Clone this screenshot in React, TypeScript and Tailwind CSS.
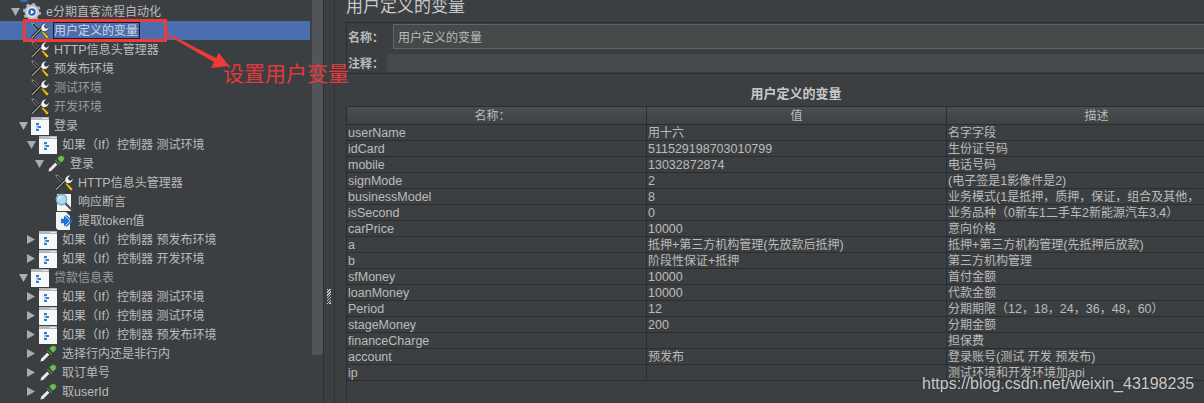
import React from 'react';

type IconKind = 'gear' | 'tools' | 'flow' | 'dropper' | 'lens' | 'extract';

interface TreeNode {
  depth: number;
  label: string;
  icon: IconKind;
  arrow?: 'open' | 'closed';
  dim?: boolean;
  selected?: boolean;
}

const nodes: TreeNode[] = [
  { depth: 0, label: 'e分期直客流程自动化', icon: 'gear', arrow: 'open' },
  { depth: 1, label: '用户定义的变量', icon: 'tools', selected: true },
  { depth: 1, label: 'HTTP信息头管理器', icon: 'tools' },
  { depth: 1, label: '预发布环境', icon: 'tools' },
  { depth: 1, label: '测试环境', icon: 'tools', dim: true },
  { depth: 1, label: '开发环境', icon: 'tools', dim: true },
  { depth: 1, label: '登录', icon: 'flow', arrow: 'open' },
  { depth: 2, label: '如果（If）控制器 测试环境', icon: 'flow', arrow: 'open' },
  { depth: 3, label: '登录', icon: 'dropper', arrow: 'open' },
  { depth: 4, label: 'HTTP信息头管理器', icon: 'tools' },
  { depth: 4, label: '响应断言', icon: 'lens' },
  { depth: 4, label: '提取token值', icon: 'extract' },
  { depth: 2, label: '如果（If）控制器 预发布环境', icon: 'flow', arrow: 'closed' },
  { depth: 2, label: '如果（If）控制器 开发环境', icon: 'flow', arrow: 'closed' },
  { depth: 1, label: '贷款信息表', icon: 'flow', arrow: 'open', dim: true },
  { depth: 2, label: '如果（If）控制器 测试环境', icon: 'flow', arrow: 'closed' },
  { depth: 2, label: '如果（If）控制器 测试环境', icon: 'flow', arrow: 'closed' },
  { depth: 2, label: '如果（If）控制器 预发布环境', icon: 'flow', arrow: 'closed' },
  { depth: 2, label: '选择行内还是非行内', icon: 'dropper', arrow: 'closed' },
  { depth: 2, label: '取订单号', icon: 'dropper', arrow: 'closed' },
  { depth: 2, label: '取userId', icon: 'dropper', arrow: 'closed' },
];

const rows: [string, string, string][] = [
  ['userName', '用十六', '名字字段'],
  ['idCard', '511529198703010799', '生份证号码'],
  ['mobile', '13032872874', '电话号码'],
  ['signMode', '2', '(电子签是1影像件是2)'],
  ['businessModel', '8', '业务模式(1是抵押，质押，保证，组合及其他，'],
  ['isSecond', '0', '业务品种（0新车1二手车2新能源汽车3,4）'],
  ['carPrice', '10000', '意向价格'],
  ['a', '抵押+第三方机构管理(先放款后抵押)', '抵押+第三方机构管理(先抵押后放款)'],
  ['b', '阶段性保证+抵押', '第三方机构管理'],
  ['sfMoney', '10000', '首付金额'],
  ['loanMoney', '10000', '代款金额'],
  ['Period', '12', '分期期限（12，18，24，36，48，60）'],
  ['stageMoney', '200', '分期金额'],
  ['financeCharge', '', '担保费'],
  ['account', '预发布', '登录账号(测试 开发 预发布)'],
  ['ip', '', '测试环境和开发环境加api'],
];

// latin runs are a bit larger than the cjk ones in the swing font
const Txt: React.FC<{ text: string }> = ({ text }) => (
  <>
    {text.split(/([\x00-\x7f]+)/).map((part, i) =>
      /[\x00-\x7f]/.test(part) ? (
        <span key={i} className="text-[12.5px] font-['Liberation_Sans','Noto_Sans_CJK_SC',sans-serif]">
          {part}
        </span>
      ) : (
        <span key={i}>{part}</span>
      ),
    )}
  </>
);

const TreeIcon: React.FC<{ kind: IconKind }> = ({ kind }) => {
  if (kind === 'gear') {
    return (
      <svg width="18" height="18" viewBox="0 0 18 18" className="shrink-0">
        <circle cx="9" cy="9" r="7.400" fill="#c3c8cc" />
        <circle cx="9" cy="9" r="8" fill="none" stroke="#b4babf" strokeWidth="2" strokeDasharray="3 3.300" />
        <circle cx="9" cy="9" r="5" fill="#eef2f6" />
        <circle cx="9" cy="9" r="3.800" fill="#2a68b8" />
        <path d="M7.800 6.800l3.400 2.200-3.400 2.200z" fill="#fff" />
      </svg>
    );
  }
  if (kind === 'tools') {
    return (
      <svg width="18" height="18" viewBox="0 0 18 18" className="shrink-0">
        {/* screwdriver shaft goes under the wrench */}
        <path d="M.8.800l2.400 1L10 8.500 8.500 10 1.800 3.200z" fill="#1b1b1b" stroke="#e2e2e2" strokeWidth="0.500" />
        {/* wrench */}
        <path d="M1 15.800L11.200 5.600" stroke="#111" strokeWidth="3" />
        <path d="M1 15.800L11.200 5.600" stroke="#9a9fa3" strokeWidth="1.400" />
        <path d="M10 7.800c-.8-2.800 1-6.200 4.800-6.800l.7.500-2.300 2.300.6 2 2 .6 2-2.200.3.700c-.4 3.400-3.800 5.400-6.400 4.400z" fill="#f2f3f3" stroke="#222" strokeWidth="0.600" />
        {/* handle */}
        <path d="M10.400 10.200l1.300-1.200 5.800 5.600c.6.800-1.300 2.700-2.100 2z" fill="#f4c20d" stroke="#3d3206" strokeWidth="0.600" />
      </svg>
    );
  }
  if (kind === 'flow') {
    return (
      <svg width="18" height="18" viewBox="0 0 18 18" className="shrink-0">
        <rect x="0" y="0" width="18" height="18" fill="#f7f8f8" />
        <rect x="0" y="0" width="18" height="3" fill="#b4b8bb" />
        <rect x="11" y="1" width="6" height="1" fill="#e4e6e8" />
        <path d="M6 7v6.500M6 9.500h2" stroke="#8a929c" strokeWidth="0.800" fill="none" />
        <rect x="5" y="6" width="3" height="2" fill="#2d7fd8" />
        <rect x="7" y="9" width="3" height="2" fill="#2d7fd8" />
        <rect x="5" y="12" width="3" height="2" fill="#2d7fd8" />
      </svg>
    );
  }
  if (kind === 'dropper') {
    return (
      <svg width="18" height="18" viewBox="0 0 18 18" className="shrink-0">
        <path d="M.8 17.200l.8-3.400 6.600-6.600 2.600 2.600L4.200 16.400z" fill="#eceeee" stroke="#1f1f1f" strokeWidth="0.800" />
        <path d="M7 5.800l1.800-1.800 5.200 5.200-1.800 1.800z" fill="#55704a" stroke="#26331f" strokeWidth="0.600" />
        <path d="M10.400 3.600C11.400 1.800 13 .2 15 .8c2 .6 2.600 2.400 2 3.800-.6 1.300-2 2.400-3.400 3.200z" fill="#6dbb55" stroke="#3a6d2c" strokeWidth="0.500" />
      </svg>
    );
  }
  if (kind === 'lens') {
    return (
      <svg width="18" height="18" viewBox="0 0 18 18" className="shrink-0">
        <rect x="2" y="1" width="14" height="17" fill="#f4f5f5" />
        <path d="M10.500 10.500l6 6" stroke="#4b5156" strokeWidth="2.400" strokeLinecap="round" />
        <circle cx="6.500" cy="6.500" r="5.200" fill="#a9dcf2" stroke="#7aa8c0" strokeWidth="1.400" />
        <path d="M3.500 6c.4-1.500 1.400-2.500 3-2.800" stroke="#fff" strokeWidth="1" fill="none" />
      </svg>
    );
  }
  return (
    <svg width="18" height="18" viewBox="0 0 18 18" className="shrink-0">
      <path d="M1 0h10l4 4v14H3l-2-2z" fill="#f1f2f2" />
      <path d="M9 3.500l6 5.500-6 5.500v-3.200H6V6.700h3z" fill="#1c74d2" />
      <path d="M11 3.500l6 5.500-6 5.500" fill="none" stroke="#1c74d2" strokeWidth="1.200" />
    </svg>
  );
};

const Arrow: React.FC<{ dir?: 'open' | 'closed' }> = ({ dir }) => (
  <span className="flex w-[12px] shrink-0 justify-start">
    {dir === 'open' && (
      <svg width="9" height="8" viewBox="0 0 9 8">
        <path d="M0 0h9L4.500 8z" fill="#a9adb0" />
      </svg>
    )}
    {dir === 'closed' && (
      <svg width="8" height="9" viewBox="0 0 8 9">
        <path d="M0 0v9l8-4.500z" fill="#a9adb0" />
      </svg>
    )}
  </span>
);

const Row: React.FC<{ node: TreeNode }> = ({ node }) => (
  <div
    className={`flex h-[19px] items-center ${node.selected ? 'bg-[#4b6eaf]' : ''}`}
    style={{ paddingLeft: 11 + node.depth * 8 }}
  >
    <Arrow dir={node.arrow} />
    <TreeIcon kind={node.icon} />
    <span
      className={`ml-[4px] h-[17px] whitespace-nowrap border leading-[13px] ${
        node.selected ? 'border-[#1c1c1c] pr-[1px] text-[#cfd6e6]' : 'border-transparent'
      } ${node.dim ? 'text-[#9a9a9a]' : !node.selected ? 'text-[#bbbbbb]' : ''}`}
    >
      <Txt text={node.label} />
    </span>
  </div>
);

export default function App() {
  return (
    <div className="relative flex h-[403px] w-[1204px] overflow-hidden bg-[#3c3f41] font-['Noto_Sans_CJK_SC',sans-serif] text-[12px] text-[#bbbbbb]">
      {/* tree */}
      <div className="flex w-[312px] shrink-0 flex-col overflow-hidden">
        <div className="h-[2px] w-[310px] pl-[20px]">
          <div className="h-[2px] w-[8px] rounded-b bg-[#2f6fc0]" />
        </div>
        <div className="w-[310px]">
          {nodes.map((n, i) => (
            <Row key={i} node={n} />
          ))}
        </div>
      </div>
      {/* scrollbar */}
      <div className="w-[11px] shrink-0">
        <div className="h-[355px] rounded-b-[2px] bg-[#515557]" />
      </div>
      {/* splitter */}
      <div className="flex w-[12px] shrink-0 items-center justify-center border-x border-[#2f3133] pt-[190px]">
        <div className="h-[15px] w-[4px] bg-[repeating-linear-gradient(135deg,#c4c4c4_0,#c4c4c4_1px,#3c3f41_1px,#3c3f41_2px)]" />
      </div>
      {/* right panel */}
      <div className="min-w-0 flex-1 overflow-hidden pl-[11px]">
        <div className="flex h-full w-[900px] flex-col">
          <div className="mt-[-6px] h-[28px] text-[17px] leading-[22px] text-[#c8c8c8]">用户定义的变量</div>
          <div className="h-[52px] border border-[#2b2d2e] pl-[1px]">
            <div className="mt-[1px] flex h-[25px] items-center">
              <span className="w-[45px] font-bold leading-[22px]">名称：</span>
              <div className="flex h-[25px] flex-1 items-center border border-[#646464] bg-[#45494a] pl-[4px]">用户定义的变量</div>
            </div>
            <div className="mt-[5px] flex h-[18px] items-center">
              <span className="w-[39px] font-bold leading-[16px]">注释：</span>
              <div className="h-[18px] flex-1 bg-[#45494a]" />
            </div>
          </div>
          <div className="mt-[12px] h-[20px] text-center text-[13px] font-bold leading-[14px] text-[#c8c8c8]">用户定义的变量</div>
          <div className="flex-1 border-l border-[#2b2d2e]">
            <div className="flex h-[19px] border-y border-[#2b2d2e] bg-gradient-to-b from-[#4b4e50] to-[#3f4244] leading-[15px]">
              <div className="w-[300px] border-r border-[#2b2d2e] pr-[8px] text-center">名称：</div>
              <div className="w-[300px] border-r border-[#2b2d2e] text-center">值</div>
              <div className="w-[299px] text-center">描述</div>
            </div>
            {rows.map((r) => (
              <div key={r[0]} className="flex h-[16px] border-b border-[#2b2d2e] leading-[14px]">
                <div className="w-[300px] whitespace-nowrap border-r border-[#2b2d2e] pl-[1px]">
                  <Txt text={r[0]} />
                </div>
                <div className="w-[300px] whitespace-nowrap border-r border-[#2b2d2e] pl-[1px]">
                  <Txt text={r[1]} />
                </div>
                <div className="w-[299px] whitespace-nowrap pl-[1px]">
                  <Txt text={r[2]} />
                </div>
              </div>
            ))}
          </div>
        </div>
      </div>
      {/* annotations drawn on top of the screenshot */}
      <div className="absolute left-[23px] top-[19px] h-[23px] w-[144px] border-[3px] border-[#f03a3a]" />
      <svg className="absolute left-[160px] top-[28px]" width="75" height="45" viewBox="0 0 75 45">
        <path d="M7 5l49 25 3-5 10 13-18 2 3-6L7 7z" fill="#f03a3a" />
      </svg>
      <div className="absolute left-[223px] top-[58px] whitespace-nowrap text-[21px] leading-[28px] text-[#e23a3a]">设置用户变量</div>
      <div className="absolute left-[922px] top-[374px] whitespace-nowrap font-['Liberation_Sans',sans-serif] text-[16px] leading-[20px] text-[#c9c9c9] [text-shadow:0_0_2px_#2b2b2b]">
        https://blog.csdn.net/weixin_43198235
      </div>
    </div>
  );
}
